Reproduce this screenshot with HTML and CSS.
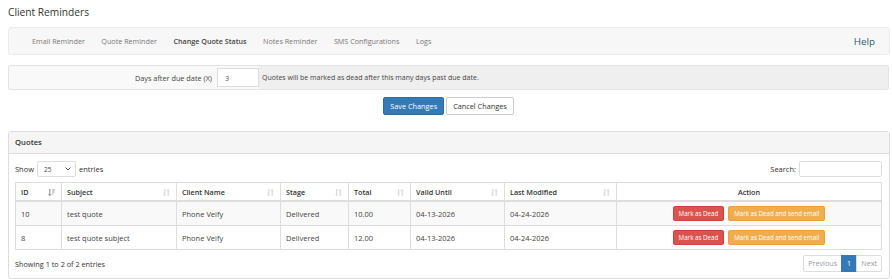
FILE: index.html
```html
<!DOCTYPE html>
<html lang="en">
<head>
  <meta charset="UTF-8">
  <title>Client Reminders</title>
  <link rel="stylesheet" href="styles.css">
</head>
<body>
  <h1 class="page-title">Client Reminders</h1>

  <nav class="tabs">
    <ul class="tab-list">
      <li>Email Reminder</li>
      <li>Quote Reminder</li>
      <li class="active">Change Quote Status</li>
      <li>Notes Reminder</li>
      <li>SMS Configurations</li>
      <li>Logs</li>
    </ul>
    <a class="help">Help</a>
  </nav>

  <div class="setting-row">
    <label class="setting-label">Days after due date (X)</label>
    <input class="setting-input" type="text" value="3">
    <span class="setting-note">Quotes will be marked as dead after this many days past due date.</span>
  </div>

  <div class="form-actions">
    <button class="btn btn-primary">Save Changes</button>
    <button class="btn btn-default">Cancel Changes</button>
  </div>

  <div class="panel">
    <div class="panel-heading">Quotes</div>
    <div class="panel-body">
      <div class="table-top">
        <div class="length">Show
          <span class="select">25 <svg width="6" height="4" viewBox="0 0 6 4"><path d="M0.5 0.5 L3 3 L5.5 0.5" fill="none" stroke="#555" stroke-width="1"/></svg></span>
          entries</div>
        <div class="search">Search: <span class="search-box"></span></div>
      </div>

      <table class="data">
        <colgroup>
          <col class="w-id"><col class="w-subject"><col class="w-client"><col class="w-stage"><col class="w-total"><col class="w-valid"><col class="w-modified"><col>
        </colgroup>
        <thead>
          <tr>
            <th>ID <svg class="sort" width="7" height="7" viewBox="0 0 7 7"><path d="M1.8 0 V6.5 M0.6 5.2 L1.8 6.5 L3 5.2" stroke="#777" stroke-width="0.9" fill="none"/><path d="M4 1 H7 M4 3 H6.5 M4 5 H5.5" stroke="#999" stroke-width="0.9"/></svg></th>
            <th>Subject <svg class="sort" width="7" height="7" viewBox="0 0 7 7"><path d="M1.8 0 V6.5 M0.6 5.2 L1.8 6.5 M5.2 0.5 V7 M4 1.8 L5.2 0.5" stroke="#ccc" stroke-width="0.9" fill="none"/></svg></th>
            <th>Client Name <svg class="sort" width="7" height="7" viewBox="0 0 7 7"><path d="M1.8 0 V6.5 M0.6 5.2 L1.8 6.5 M5.2 0.5 V7 M4 1.8 L5.2 0.5" stroke="#ccc" stroke-width="0.9" fill="none"/></svg></th>
            <th>Stage <svg class="sort" width="7" height="7" viewBox="0 0 7 7"><path d="M1.8 0 V6.5 M0.6 5.2 L1.8 6.5 M5.2 0.5 V7 M4 1.8 L5.2 0.5" stroke="#ccc" stroke-width="0.9" fill="none"/></svg></th>
            <th>Total <svg class="sort" width="7" height="7" viewBox="0 0 7 7"><path d="M1.8 0 V6.5 M0.6 5.2 L1.8 6.5 M5.2 0.5 V7 M4 1.8 L5.2 0.5" stroke="#ccc" stroke-width="0.9" fill="none"/></svg></th>
            <th>Valid Until <svg class="sort" width="7" height="7" viewBox="0 0 7 7"><path d="M1.8 0 V6.5 M0.6 5.2 L1.8 6.5 M5.2 0.5 V7 M4 1.8 L5.2 0.5" stroke="#ccc" stroke-width="0.9" fill="none"/></svg></th>
            <th>Last Modified <svg class="sort" width="7" height="7" viewBox="0 0 7 7"><path d="M1.8 0 V6.5 M0.6 5.2 L1.8 6.5 M5.2 0.5 V7 M4 1.8 L5.2 0.5" stroke="#ccc" stroke-width="0.9" fill="none"/></svg></th>
            <th class="c-action">Action</th>
          </tr>
        </thead>
        <tbody>
          <tr class="odd">
            <td>10</td>
            <td>test quote</td>
            <td>Phone Veify</td>
            <td>Delivered</td>
            <td>10.00</td>
            <td>04-13-2026</td>
            <td>04-24-2026</td>
            <td class="c-action"><button class="btn-sm btn-danger">Mark as Dead</button><button class="btn-sm btn-warning">Mark as Dead and send email</button></td>
          </tr>
          <tr>
            <td>8</td>
            <td>test quote subject</td>
            <td>Phone Veify</td>
            <td>Delivered</td>
            <td>12.00</td>
            <td>04-13-2026</td>
            <td>04-24-2026</td>
            <td class="c-action"><button class="btn-sm btn-danger">Mark as Dead</button><button class="btn-sm btn-warning">Mark as Dead and send email</button></td>
          </tr>
        </tbody>
      </table>

      <div class="table-bottom">
        <div class="info">Showing 1 to 2 of 2 entries</div>
        <ul class="pager">
          <li class="disabled">Previous</li>
          <li class="current">1</li>
          <li class="disabled">Next</li>
        </ul>
      </div>
    </div>
  </div>
</body>
</html>
```

FILE: styles.css
```css
body {
  margin: 0;
  padding: 0 2px 0 8px;
  font-family: 'Open Sans', sans-serif;
  font-size: 7.5px;
  color: #333;
  background: #fff;
}
.page-title {
  margin: 4px 0 0;
  font-size: 10.2px;
  font-weight: 400;
  line-height: 16px;
  color: #333;
}
.tabs {
  margin-top: 7px;
  height: 26px;
  display: flex;
  align-items: center;
  justify-content: space-between;
  background: #f7f7f7;
  border: 1px solid #ebebeb;
  border-radius: 3px;
  padding: 0 14px 0 23px;
}
.tab-list {
  display: flex;
  gap: 16.5px;
  list-style: none;
  margin: 0;
  padding: 0;
  font-size: 7.2px;
  color: #777;
}
.tab-list .active {
  color: #444;
  font-weight: 600;
}
.help {
  font-size: 9.8px;
  color: #1f5f74;
}
.setting-row {
  margin-top: 10px;
  margin-right: 1px;
  height: 23px;
  display: flex;
  align-items: center;
  background: #f9f9f9;
  border: 1px solid #e3e3e3;
  border-radius: 2px;
}
.setting-label {
  width: 203px;
  text-align: right;
  padding-right: 5px;
  font-size: 7.3px;
  color: #444;
}
.setting-input {
  width: 42px;
  height: 19px;
  box-sizing: border-box;
  border: 1px solid #ddd;
  background: #fff;
  font: 7.2px 'Open Sans', sans-serif;
  color: #555;
  padding: 0 0 0 7px;
  margin: 0;
}
.setting-note {
  flex: 1;
  align-self: stretch;
  display: flex;
  align-items: center;
  padding-left: 3px;
  background: #efefef;
  font-size: 7px;
  color: #444;
}
.form-actions {
  display: flex;
  justify-content: center;
  gap: 2px;
  margin-top: 7px;
  padding-right: 1px;
}
.btn {
  height: 18px;
  font: 7.3px 'Open Sans', sans-serif;
  border-radius: 2px;
  padding: 0 6px;
  border: 1px solid #ccc;
  margin: 0;
}
.btn-primary {
  background: #337ab7;
  border-color: #2e6da4;
  color: #fff;
}
.btn-default {
  background: #fff;
  color: #333;
}
.panel {
  margin-top: 16px;
  border: 1px solid #ddd;
  border-radius: 3px;
  height: 146px;
}
.panel-heading {
  height: 21px;
  line-height: 21px;
  padding-left: 6px;
  background: #f5f5f5;
  border-bottom: 1px solid #ddd;
  font-size: 7.7px;
  font-weight: 600;
  color: #333;
}
.panel-body {
  padding: 7px 7px 0 6px;
}
.table-top {
  display: flex;
  justify-content: space-between;
  align-items: center;
  height: 16px;
}
.length {
  display: flex;
  align-items: center;
  gap: 3px;
}
.select {
  width: 39px;
  height: 16px;
  box-sizing: border-box;
  border: 1px solid #ddd;
  border-radius: 2px;
  display: flex;
  align-items: center;
  justify-content: space-between;
  padding: 0 4px 0 6px;
  font-size: 6.5px;
  color: #444;
}
.search {
  display: flex;
  align-items: center;
  gap: 3px;
}
.search-box {
  width: 83px;
  height: 16px;
  box-sizing: border-box;
  border: 1px solid #ddd;
  border-radius: 2px;
}
.data {
  width: 100%;
  table-layout: fixed;
  margin-top: 5px;
  border-collapse: collapse;
  border: 1px solid #ddd;
}
.w-id { width: 46px; }
.w-subject { width: 115px; }
.w-client { width: 104px; }
.w-stage { width: 68px; }
.w-total { width: 62px; }
.w-valid { width: 94px; }
.w-modified { width: 112px; }
.data th {
  height: 17px;
  text-align: left;
  font-size: 7.2px;
  font-weight: 600;
  padding: 0 5px;
  border: 1px solid #ddd;
  border-bottom: 2px solid #ddd;
  position: relative;
}
.data th .sort {
  position: absolute;
  right: 6px;
  top: 6px;
}
.data td {
  height: 23px;
  padding: 0 5px;
  border: 1px solid #ddd;
  color: #444;
}
.data .odd td {
  background: #f9f9f9;
}
.data .c-action {
  text-align: center;
}
.btn-sm {
  height: 15px;
  font: 6.2px 'Open Sans', sans-serif;
  color: #fff;
  border-radius: 2px;
  border: 1px solid transparent;
  padding: 0 5px;
  margin: 0 2px;
}
.btn-danger {
  background: #d9534f;
  border-color: #d43f3a;
}
.btn-warning {
  background: #f0ad4e;
  border-color: #eea236;
}
.table-bottom {
  display: flex;
  justify-content: space-between;
  align-items: center;
  margin-top: 5px;
}
.info {
  font-size: 7.3px;
}
.pager {
  display: flex;
  list-style: none;
  margin: 0;
  padding: 0;
}
.pager li {
  height: 15px;
  line-height: 15px;
  padding: 0 4px;
  border: 1px solid #ddd;
  margin-left: -1px;
  color: #999;
  font-size: 7.2px;
}
.pager li:first-child {
  border-radius: 2px 0 0 2px;
}
.pager li:last-child {
  border-radius: 0 2px 2px 0;
}
.pager .current {
  background: #337ab7;
  border-color: #337ab7;
  color: #fff;
  padding: 0 5px;
}
```
